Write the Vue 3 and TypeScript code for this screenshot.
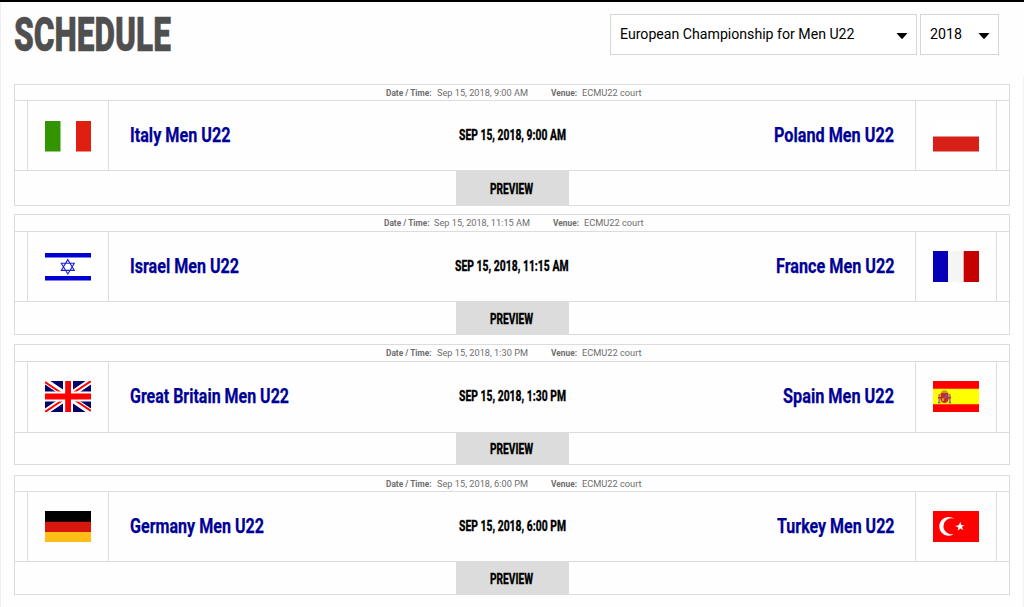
<script setup lang="ts">
import { h } from 'vue'

interface FitProps {
  text: string
  width: number
  size: number
}

// Text condensed to a fixed width, with capitals centred in the box.
const FitText = (props: FitProps) =>
  h('svg', { width: props.width, height: props.size, style: { display: 'block', overflow: 'visible', flex: 'none' } }, [
    h(
      'text',
      {
        x: 0,
        y: props.size * 0.855,
        'font-size': props.size,
        textLength: props.width,
        lengthAdjust: 'spacingAndGlyphs',
        fill: 'currentColor',
      },
      props.text,
    ),
  ])
FitText.props = ['text', 'width', 'size']

interface Team {
  name: string
  width: number
  flag: string
}

interface Match {
  date: string
  metaWidth: number
  dateWidth: number
  head: number
  body: number
  foot: number
  gap: number
  flagTop: number
  home: Team
  away: Team
}

const matches: Match[] = [
  {
    date: 'Sep 15, 2018, 9:00 AM', metaWidth: 91, dateWidth: 107, head: 15, body: 69, foot: 34, gap: 8, flagTop: 20,
    home: { name: 'Italy Men U22', width: 100.5, flag: 'it' },
    away: { name: 'Poland Men U22', width: 120, flag: 'pl' },
  },
  {
    date: 'Sep 15, 2018, 11:15 AM', metaWidth: 96, dateWidth: 113.5, head: 16, body: 69, foot: 32, gap: 9, flagTop: 19,
    home: { name: 'Israel Men U22', width: 109, flag: 'il' },
    away: { name: 'France Men U22', width: 118.5, flag: 'fr' },
  },
  {
    date: 'Sep 15, 2018, 1:30 PM', metaWidth: 91, dateWidth: 107, head: 16, body: 70, foot: 31, gap: 10, flagTop: 19,
    home: { name: 'Great Britain Men U22', width: 159, flag: 'gb' },
    away: { name: 'Spain Men U22', width: 111, flag: 'es' },
  },
  {
    date: 'Sep 15, 2018, 6:00 PM', metaWidth: 91, dateWidth: 107, head: 15, body: 69, foot: 32, gap: 0, flagTop: 19,
    home: { name: 'Germany Men U22', width: 134, flag: 'de' },
    away: { name: 'Turkey Men U22', width: 117.5, flag: 'tr' },
  },
]
</script>

<template>
  <main class="page">
    <header class="top">
      <h1 class="title"><FitText text="SCHEDULE" :width="157" :size="49" /></h1>
      <div class="filters">
        <div class="select wide">
          <FitText text="European Championship for Men U22" :width="234.5" :size="14.5" />
          <svg class="caret" width="12" height="6" viewBox="0 0 12 6"><path d="M.5 0h11L7 5.2Q6 6.2 5 5.2z" /></svg>
        </div>
        <div class="select">
          <FitText text="2018" :width="32" :size="14.5" />
          <svg class="caret" width="12" height="6" viewBox="0 0 12 6"><path d="M.5 0h11L7 5.2Q6 6.2 5 5.2z" /></svg>
        </div>
      </div>
    </header>

    <section class="list">
      <article v-for="m in matches" :key="m.home.name" class="card" :style="{ marginBottom: m.gap + 'px' }">
        <div class="meta" :style="{ height: m.head + 'px' }">
          <FitText class="label" text="Date / Time:" :width="45.5" :size="9" />
          <FitText class="value" :text="m.date" :width="m.metaWidth" :size="9.3" />
          <FitText class="label venue" text="Venue:" :width="26" :size="9" />
          <FitText class="value" text="ECMU22 court" :width="59.5" :size="9.3" />
        </div>

        <div class="body" :style="{ height: m.body + 'px' }">
          <div
            v-for="(team, i) in [m.home, m.away]"
            :key="team.name"
            class="flag-cell"
            :class="{ right: i === 1 }"
            :style="{ paddingTop: m.flagTop + 'px' }"
          >
            <svg class="flag" width="46" height="31" viewBox="0 0 46 31" preserveAspectRatio="none">
              <template v-if="team.flag === 'it'">
                <path fill="#fff" d="M0 0h46v31H0z" />
                <path fill="#319400" d="M0 0h15.5v30.5H0z" />
                <path fill="#df2010" d="M31 0h15v30.5H31z" />
              </template>
              <template v-else-if="team.flag === 'pl'">
                <path fill="#fff" d="M0 0h46v15H0z" />
                <path fill="#d62018" d="M0 15.4h46v15.2H0z" />
              </template>
              <template v-else-if="team.flag === 'il'">
                <path fill="#fff" d="M0 0h46v31H0z" />
                <path fill="#0000d0" d="M0 2h46v4.6H0zM0 25h46v4.6H0z" />
                <path fill="none" stroke="#2020d6" stroke-width="1.1" d="M22.8 8.6l6.5 10.8H16.3zM22.8 23l6.5-10.8H16.3z" />
              </template>
              <template v-else-if="team.flag === 'fr'">
                <path fill="#f5f5f5" d="M0 0h46v31H0z" />
                <path fill="#0500b8" d="M0 0h15v31H0z" />
                <path fill="#c60000" d="M30.7 0H46v31H30.7z" />
              </template>
              <template v-else-if="team.flag === 'gb'">
                <path fill="#000066" d="M0 0h46v31H0z" />
                <path stroke="#fff" stroke-width="6" d="M0 0l46 31M46 0L0 31" />
                <path stroke="#f00" stroke-width="2" d="M0 1l20 13.5M46 0L26 13.5M46 30L26 16.5M0 31l20-13.5" />
                <path fill="#fff" d="M18 0h10v31H18zM0 10.4h46v10.2H0z" />
                <path fill="#f00" d="M20.2 0h5.8v31h-5.8zM0 12.6h46v5.8H0z" />
              </template>
              <template v-else-if="team.flag === 'es'">
                <path fill="#f00" d="M0 0h46v31H0z" />
                <path fill="#ff0" d="M0 7.7h46v15.6H0z" />
                <path fill="#9a8390" d="M5.4 13h1.7v8.8H5.4zM16 13h1.7v8.8H16z" />
                <path fill="#c92b20" d="M7.5 12.5q4-5 8 0v6.5q-1 3-4 3t-4-3zM5 16h3v1.6H5zM15 16h3v1.6h-3z" />
                <path fill="#c49a20" d="M8.5 10.4q3-2.5 6 0v1.7h-6zM9 17h2v3H9z" />
                <path fill="#7d5aa0" d="M12 13.5h2v3h-2zM10.8 16h1.6v1.8h-1.6z" />
                <path fill="#3b579d" d="M5 21.2h2.6v1H5zM15.6 21.2h2.6v1h-2.6z" />
              </template>
              <template v-else-if="team.flag === 'de'">
                <path d="M0 0h46v11H0z" />
                <path fill="#d8170f" d="M0 10.7h46v10.6H0z" />
                <path fill="#ffbd18" d="M0 21h46v10H0z" />
              </template>
              <template v-else>
                <path fill="#f00" d="M0 0h46v31H0z" />
                <path fill="#fff" d="M21.3 7.8A9.4 9.4 0 1 0 21.3 22.8A8 8 0 1 1 21.3 7.8z" />
                <path fill="#fff" d="M27.4 10.9l1 3.3 3.2-.2-2.7 2 1.4 3-2.9-1.6-2.5 2.3.5-3.3-3.2-1.3 3.4-.8z" />
              </template>
            </svg>
          </div>

          <div class="fixture">
            <FitText class="team" :text="m.home.name" :width="m.home.width" :size="19.5" />
            <FitText class="kickoff" :text="m.date.toUpperCase()" :width="m.dateWidth" :size="15.5" />
            <FitText class="team away" :text="m.away.name" :width="m.away.width" :size="19.5" />
          </div>
        </div>

        <div class="foot" :style="{ height: m.foot + 'px' }">
          <button class="preview" type="button"><FitText text="PREVIEW" :width="43" :size="15.5" /></button>
        </div>
      </article>
    </section>
  </main>
</template>

<style>
body {
  margin: 0;
  background: #fefefe;
}
</style>

<style scoped>
.page {
  box-sizing: border-box;
  width: 1024px;
  height: 607px;
  overflow: hidden;
  border-top: 2px solid #000;
  background: #fefefe;
  font-family: Roboto, "Liberation Sans", sans-serif;
}

.top {
  box-sizing: border-box;
  display: flex;
  justify-content: space-between;
  height: 74px;
  padding: 12px 25px 0 14px;
  border-left: 1px solid #eee;
}

.title {
  margin: -5px 0 0 -1px;
  height: 49px;
  color: #4f4f4f;
  font-weight: 900;
  stroke: #4f4f4f;
  stroke-width: 0.5px;
}

.filters {
  display: flex;
  gap: 3px;
}

.select {
  box-sizing: border-box;
  display: flex;
  align-items: center;
  justify-content: space-between;
  width: 79px;
  height: 41px;
  padding: 0 8px 0 9px;
  border: 1px solid #d3d7da;
  background: #fff;
  color: #000;
}

.select.wide {
  width: 307px;
}

.caret {
  margin-top: 2px;
}

.list {
  box-sizing: border-box;
  height: 531px;
  padding: 8px 13px 0;
  border-left: 1px solid #eee;
  border-right: 1px solid #f3f3f3;
}

.card {
  border: 1px solid #dcdcdc;
}

.meta {
  box-sizing: content-box;
  display: flex;
  align-items: flex-start;
  justify-content: center;
  padding-left: 3px;
  border-bottom: 1px solid #dcdcdc;
  color: #6e6e6e;
}

.meta > svg {
  margin-top: 3px;
}

.label {
  margin-right: 5px;
  font-weight: 700;
}

.venue {
  margin-left: 23px;
}

.body {
  display: grid;
  grid-template-columns: 12px 82px 1fr 82px 12px;
  border-bottom: 1px solid #dcdcdc;
}

.flag-cell {
  box-sizing: border-box;
  grid-row: 1;
  grid-column: 2;
  display: flex;
  align-items: flex-start;
  justify-content: center;
  border: solid #dcdcdc;
  border-width: 0 1px;
}

.flag-cell.right {
  grid-column: 4;
}

.flag {
  display: block;
}

.fixture {
  grid-row: 1;
  grid-column: 3;
  display: grid;
  grid-template-columns: 1fr auto 1fr;
  align-items: center;
  padding: 0 21px 2px;
}

.team {
  color: #000096;
  font-weight: 700;
  stroke: #000096;
  stroke-width: 0.25px;
}

.away {
  justify-self: end;
}

.kickoff {
  color: #000;
  font-weight: 800;
  stroke: #000;
  stroke-width: 0.3px;
}

.foot {
  display: flex;
  justify-content: center;
}

.preview {
  display: flex;
  align-items: center;
  justify-content: center;
  width: 113px;
  padding: 1px 1px 0 0;
  border: 0;
  background: #dcdcdc;
  color: #000;
  font-family: inherit;
  font-weight: 800;
  stroke: #000;
  stroke-width: 0.3px;
}
</style>
